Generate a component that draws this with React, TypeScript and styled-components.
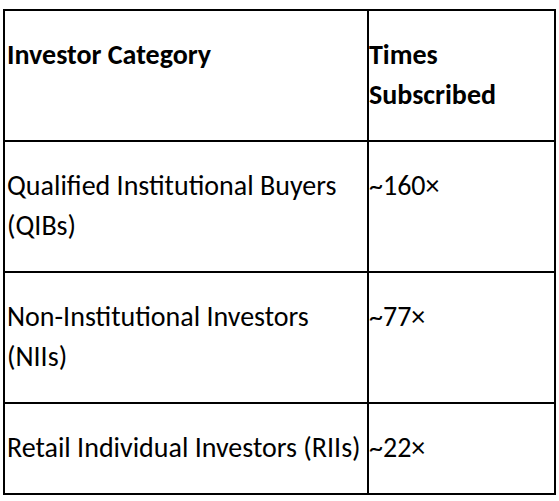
import React from 'react';
import styled, { createGlobalStyle } from 'styled-components';

const GlobalStyle = createGlobalStyle`
  body {
    margin: 0;
    background: #fff;
    color: #000;
    font-family: Carlito, Lato, "Liberation Sans", sans-serif;
  }
`;

const Page = styled.div`
  padding: 9px 0 0 3px;
`;

const Table = styled.table`
  width: 551px;
  table-layout: fixed;
  border-collapse: separate;
  border-spacing: 0;
  border-top: 2px solid #000;
  border-left: 2px solid #000;
`;

const Cell = styled.td<{ $head?: boolean; $tight?: boolean }>`
  border-right: 2px solid #000;
  border-bottom: 2px solid #000;
  padding: 24px 2px 25px ${props => (props.$tight ? '0' : '2px')};
  vertical-align: top;
  font-size: 28px;
  line-height: 40px;
  font-weight: ${props => (props.$head ? 700 : 400)};
`;

const rows = [
  { category: 'Qualified Institutional Buyers (QIBs)', times: '~160×' },
  { category: 'Non-Institutional Investors (NIIs)', times: '~77×' },
  { category: 'Retail Individual Investors (RIIs)', times: '~22×' },
];

const App = () => {
  return (
    <Page>
      <GlobalStyle />
      <Table>
        <colgroup>
          <col style={{ width: 364 }} />
          <col style={{ width: 187 }} />
        </colgroup>
        <tbody>
          <tr>
            <Cell $head>Investor Category</Cell>
            <Cell $head $tight>Times Subscribed</Cell>
          </tr>
          {rows.map((row, index) => (
            <tr key={index}>
              <Cell>{row.category}</Cell>
              <Cell $tight>{row.times}</Cell>
            </tr>
          ))}
        </tbody>
      </Table>
    </Page>
  );
};

export default App;
